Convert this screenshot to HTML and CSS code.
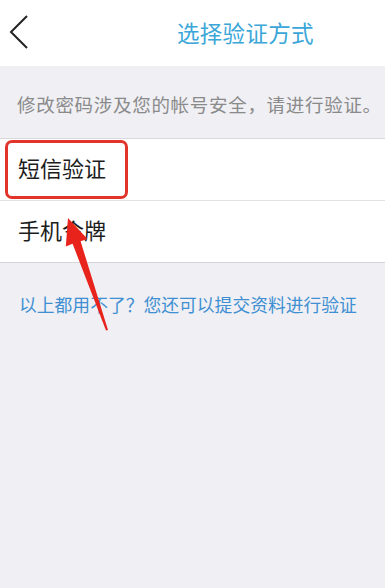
FILE: index.html
```html
<!DOCTYPE html>
<html lang="zh-CN">
<head>
<meta charset="utf-8">
<title>选择验证方式</title>
<link rel="stylesheet" href="styles.css">
</head>
<body>
<div class="page">
  <header class="topbar">
    <svg class="back" width="20" height="34" viewBox="0 0 20 34"><polyline points="18,1 2,17 18,33" fill="none" stroke="#222" stroke-width="2"/></svg>
    <h1 class="title">选择验证方式</h1>
  </header>
  <p class="notice">修改密码涉及您的帐号安全，请进行验证。</p>
  <ul class="list">
    <li class="item item-sms">短信验证<span class="highlight"></span></li>
    <li class="item">手机令牌</li>
  </ul>
  <p class="more">以上都用不了？您还可以提交资料进行验证</p>
  <svg class="pointer" width="385" height="588" viewBox="0 0 385 588">
    <polygon points="68,218 87.5,239 80.6,241.3 108,330 106,330.5 72.6,243.8 65.8,246.5" fill="#e8231c"/>
  </svg>
</div>
</body>
</html>
```

FILE: styles.css
```css
html, body {
  margin: 0;
  padding: 0;
  background: #efeff4;
}
body {
  font-family: "Noto Sans CJK SC", "Noto Sans", sans-serif;
}
.page {
  position: relative;
  width: 385px;
  height: 588px;
  overflow: hidden;
}
.topbar {
  height: 66px;
  background: #ffffff;
  display: flex;
  align-items: center;
}
.back {
  margin-left: 9px;
  margin-top: -2px;
}
.title {
  margin: 0 0 0 148px;
  font-size: 22.5px;
  font-weight: normal;
  color: #3ba6d8;
  letter-spacing: 0.3px;
  line-height: 30px;
  margin-top: -2px;
}
.notice {
  margin: 0;
  padding: 26px 0 21px 17px;
  font-size: 18.5px;
  line-height: 25px;
  color: #8a8a8a;
  letter-spacing: 0.7px;
  white-space: nowrap;
}
.list {
  list-style: none;
  margin: 0;
  padding: 0;
  background: #ffffff;
  border-top: 1px solid #d9d9dc;
  border-bottom: 1px solid #d4d4d8;
}
.item {
  position: relative;
  height: 61px;
  box-sizing: border-box;
  padding: 0 0 5px 18px;
  display: flex;
  align-items: center;
  font-size: 22px;
  color: #1c1c1c;
}
.item + .item {
  height: 62px;
  border-top: 1px solid #e2e2e5;
}
.highlight {
  position: absolute;
  left: 5px;
  top: 1px;
  width: 117px;
  height: 53px;
  border: 3px solid #e3342c;
  border-radius: 7px;
}
.more {
  margin: 29px 0 0 19px;
  font-size: 17.8px;
  line-height: 24px;
  color: #3f8fd2;
}
.pointer {
  position: absolute;
  left: 0;
  top: 0;
  pointer-events: none;
}
```
